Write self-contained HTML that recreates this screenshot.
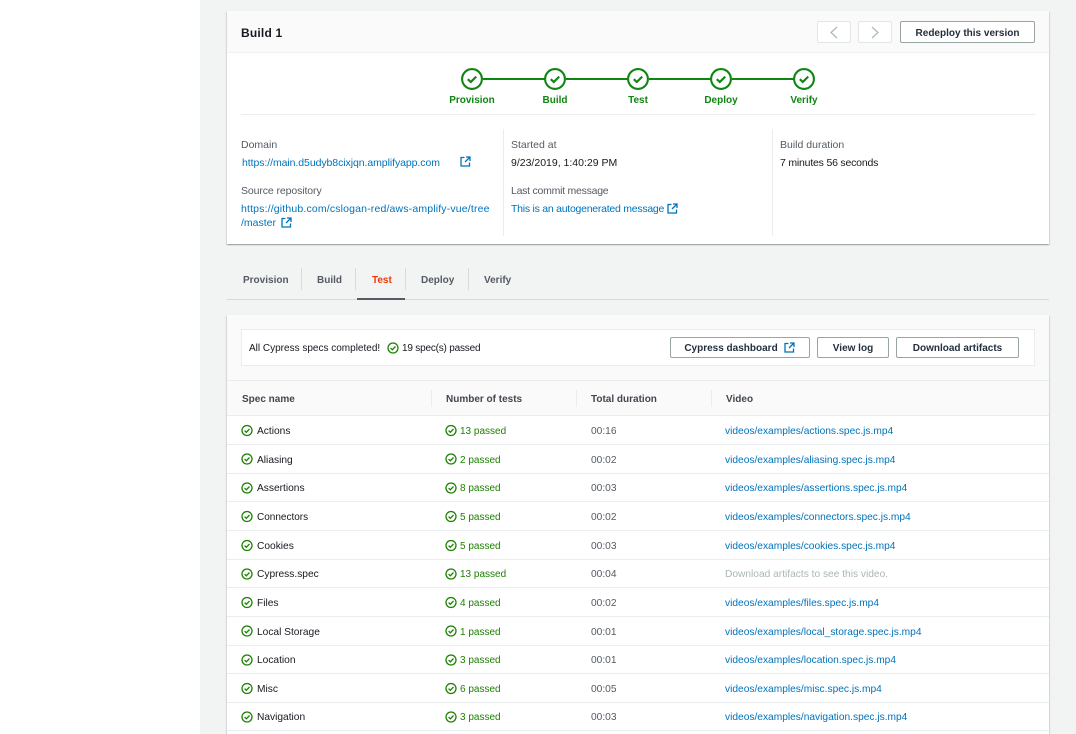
<!DOCTYPE html>
<html><head><meta charset="utf-8"><style>
html,body{margin:0;padding:0;width:1076px;height:734px;overflow:hidden;background:#fff}
body{position:relative;font-family:"Liberation Sans",sans-serif;font-size:10.5px;color:#16191f;filter:blur(.25px)}
div,a{position:absolute;white-space:nowrap}
a{color:#0073bb;text-decoration:none}
.bg{left:200px;top:0;width:876px;height:734px;background:#f2f3f3}
.card{left:227px;width:822px;background:#fff;box-shadow:0 1px 1px 0 rgba(0,28,36,.3),1px 1px 1px 0 rgba(0,28,36,.08),-1px 1px 1px 0 rgba(0,28,36,.08)}
.lbl{color:#545b64}
.step{width:80px;text-align:center;top:95px;color:#0f8512;font-weight:bold;font-size:10px}
.btn{box-sizing:border-box;height:21px;border:1px solid #98a4a5;border-radius:2px;background:#fff;text-align:center;line-height:22px;font-weight:bold;font-size:10px;color:#232f3e}
.tab{top:275px;font-weight:bold;font-size:10px;color:#545b64}
.sep{width:1px;background:#d5dbdb}
.th{top:394px;font-weight:bold;font-size:10px;color:#414750}
.line{left:227px;width:822px;height:1px;background:#eaeded}
.t{line-height:12px;color:#16191f;font-size:10.2px;margin-top:1px}
.g{color:#1d8102;font-size:10px}
.d{color:#545b64}
svg{position:absolute;overflow:visible}
</style></head><body>
<svg width="0" height="0" style="position:absolute"><defs>
<g id="c"><circle cx="6" cy="6" r="5" fill="none" stroke="#1d8102" stroke-width="1.3"/><path d="M3.6 6.1 5.3 7.8 8.5 4.5" fill="none" stroke="#1d8102" stroke-width="1.3"/></g>
<g id="s"><circle cx="11" cy="11" r="9.9" fill="#fff" stroke="#0f8512" stroke-width="2.1"/><path d="M6.8 11.2 9.8 14 15.2 8.6" fill="none" stroke="#0f8512" stroke-width="2.1"/></g>
<g id="e"><path d="M4.5 1.5H1V10H9.5V6.5M6 1H10V5M10 1 5 6" fill="none" stroke="#0073bb" stroke-width="1.3"/></g>
</defs></svg>
<div class="bg"></div>

<div class="card" style="top:11px;height:233px"></div>
<div style="left:227px;top:11px;width:822px;height:42px;background:#fafafa;border-bottom:1px solid #f0f1f1;box-sizing:border-box"></div>
<div style="left:241px;top:26px;font-size:12px;font-weight:bold;letter-spacing:.2px;color:#16191f">Build 1</div>
<div style="box-sizing:border-box;left:817px;top:21px;width:34px;height:22px;border:1px solid #e3e6e6;border-radius:2px;background:#fff"></div>
<div style="box-sizing:border-box;left:858px;top:21px;width:34px;height:22px;border:1px solid #e3e6e6;border-radius:2px;background:#fff"></div>
<svg style="left:817px;top:21px" width="75" height="22"><path d="M20 6 14 11.5 20 17M55 6 61 11.5 55 17" fill="none" stroke="#aab7b8" stroke-width="1.2"/></svg>
<div class="btn" style="left:900px;top:21px;width:135px;height:22px;line-height:23px">Redeploy this version</div>

<svg style="left:461px;top:67.5px" width="354" height="22">
<path d="M22 11H84M105 11H167M188 11H250M271 11H333" stroke="#0f8512" stroke-width="2"/>
<use href="#s" x="0"/><use href="#s" x="83"/><use href="#s" x="166"/><use href="#s" x="249"/><use href="#s" x="332"/>
</svg>
<div class="step" style="left:432px">Provision</div>
<div class="step" style="left:515px">Build</div>
<div class="step" style="left:598px">Test</div>
<div class="step" style="left:681px">Deploy</div>
<div class="step" style="left:764px">Verify</div>
<div style="left:241px;top:114px;width:794px;height:1px;background:#eaeded"></div>
<div class="sep" style="left:503px;top:129px;height:107px;background:#eaeded"></div>
<div class="sep" style="left:772px;top:129px;height:107px;background:#eaeded"></div>

<div class="lbl" style="left:241px;top:139px">Domain</div>
<a style="left:242px;top:157px;letter-spacing:-.07px">https://main.d5udyb8cixjqn.amplifyapp.com</a>
<svg style="left:460px;top:156px" width="11" height="11"><use href="#e"/></svg>
<div class="lbl" style="left:241px;top:185px;letter-spacing:-.1px">Source repository</div>
<a style="left:241px;top:203px;letter-spacing:.16px">https://github.com/cslogan-red/aws-amplify-vue/tree</a>
<a style="left:241px;top:217px">/master</a>
<svg style="left:281px;top:217px" width="11" height="11"><use href="#e"/></svg>

<div class="lbl" style="left:511px;top:139px">Started at</div>
<div style="left:511px;top:157px">9/23/2019, 1:40:29 PM</div>
<div class="lbl" style="left:511px;top:185px;letter-spacing:-.25px">Last commit message</div>
<a style="left:511px;top:203px;letter-spacing:-.25px">This is an autogenerated message</a>
<svg style="left:667px;top:203px" width="11" height="11"><use href="#e"/></svg>

<div class="lbl" style="left:780px;top:139px">Build duration</div>
<div style="left:780px;top:157px;letter-spacing:-.2px">7 minutes 56 seconds</div>

<div class="tab" style="left:243px">Provision</div>
<div class="tab" style="left:317px">Build</div>
<div class="tab" style="left:372px;color:#ec3b0b">Test</div>
<div class="tab" style="left:421px">Deploy</div>
<div class="tab" style="left:484px">Verify</div>
<div class="sep" style="left:301px;top:268px;height:22px"></div>
<div class="sep" style="left:355px;top:268px;height:22px"></div>
<div class="sep" style="left:405px;top:268px;height:22px"></div>
<div class="sep" style="left:468px;top:268px;height:22px"></div>
<div style="left:227px;top:299px;width:822px;height:1px;background:#d5dbdb"></div>
<div style="left:357px;top:298px;width:48px;height:2px;background:#545b64"></div>

<div class="card" style="top:315px;height:430px;background:#fff"></div>
<div style="left:227px;top:315px;width:822px;height:65px;background:#fafafa"></div>
<div style="box-sizing:border-box;left:241px;top:329px;width:794px;height:37px;background:#fff;border:1px solid #eaeded"></div>
<div style="left:249px;top:343px;font-size:10px">All Cypress specs completed!</div>
<svg style="left:387px;top:342px" width="12" height="12"><use href="#c"/></svg>
<div style="left:402px;top:343px;font-size:10px;letter-spacing:-.2px">19 spec(s) passed</div>
<div class="btn" style="left:670px;top:337px;width:140px;padding-right:18px">Cypress dashboard</div>
<svg style="left:784px;top:342px" width="11" height="11"><use href="#e"/></svg>
<div class="btn" style="left:817px;top:337px;width:72px">View log</div>
<div class="btn" style="left:896px;top:337px;width:123px">Download artifacts</div>

<div style="left:227px;top:380px;width:822px;height:36px;box-sizing:border-box;border-top:1px solid #eaeded;border-bottom:1px solid #eaeded;background:#fafafa"></div>
<div class="th" style="left:242px">Spec name</div>
<div class="th" style="left:446px">Number of tests</div>
<div class="th" style="left:591px">Total duration</div>
<div class="th" style="left:726px">Video</div>
<div class="sep" style="left:431px;top:390px;height:17px;background:#eaeded"></div>
<div class="sep" style="left:576px;top:390px;height:17px;background:#eaeded"></div>
<div class="sep" style="left:711px;top:390px;height:17px;background:#eaeded"></div>

<div class="line" style="top:444px"></div>
<div class="line" style="top:473px"></div>
<div class="line" style="top:501px"></div>
<div class="line" style="top:530px"></div>
<div class="line" style="top:559px"></div>
<div class="line" style="top:587px"></div>
<div class="line" style="top:616px"></div>
<div class="line" style="top:645px"></div>
<div class="line" style="top:673px"></div>
<div class="line" style="top:702px"></div>
<div class="line" style="top:730px"></div>

<svg style="left:241px;top:416px" width="215" height="318">
<use href="#c" x="0" y="8.5"/><use href="#c" x="204" y="8.5"/>
<use href="#c" x="0" y="37"/><use href="#c" x="204" y="37"/>
<use href="#c" x="0" y="66"/><use href="#c" x="204" y="66"/>
<use href="#c" x="0" y="94.5"/><use href="#c" x="204" y="94.5"/>
<use href="#c" x="0" y="123.5"/><use href="#c" x="204" y="123.5"/>
<use href="#c" x="0" y="152"/><use href="#c" x="204" y="152"/>
<use href="#c" x="0" y="180.5"/><use href="#c" x="204" y="180.5"/>
<use href="#c" x="0" y="209"/><use href="#c" x="204" y="209"/>
<use href="#c" x="0" y="238"/><use href="#c" x="204" y="238"/>
<use href="#c" x="0" y="266.5"/><use href="#c" x="204" y="266.5"/>
<use href="#c" x="0" y="295"/><use href="#c" x="204" y="295"/>
</svg>

<div class="t" style="left:257px;top:425px">Actions</div><div class="t g" style="left:460px;top:425px">13 passed</div><div class="t d" style="left:591px;top:425px">00:16</div><a class="t" style="left:725px;top:425px;color:#0073bb">videos/examples/actions.spec.js.mp4</a>
<div class="t" style="left:257px;top:454px">Aliasing</div><div class="t g" style="left:460px;top:454px">2 passed</div><div class="t d" style="left:591px;top:454px">00:02</div><a class="t" style="left:725px;top:454px;color:#0073bb">videos/examples/aliasing.spec.js.mp4</a>
<div class="t" style="left:257px;top:482px">Assertions</div><div class="t g" style="left:460px;top:482px">8 passed</div><div class="t d" style="left:591px;top:482px">00:03</div><a class="t" style="left:725px;top:482px;color:#0073bb">videos/examples/assertions.spec.js.mp4</a>
<div class="t" style="left:257px;top:511px;font-size:10px">Connectors</div><div class="t g" style="left:460px;top:511px">5 passed</div><div class="t d" style="left:591px;top:511px">00:02</div><a class="t" style="left:725px;top:511px;color:#0073bb">videos/examples/connectors.spec.js.mp4</a>
<div class="t" style="left:257px;top:540px">Cookies</div><div class="t g" style="left:460px;top:540px">5 passed</div><div class="t d" style="left:591px;top:540px">00:03</div><a class="t" style="left:725px;top:540px;color:#0073bb">videos/examples/cookies.spec.js.mp4</a>
<div class="t" style="left:257px;top:568px">Cypress.spec</div><div class="t g" style="left:460px;top:568px">13 passed</div><div class="t d" style="left:591px;top:568px">00:04</div><div class="t" style="left:725px;top:568px;color:#aab7b8">Download artifacts to see this video.</div>
<div class="t" style="left:257px;top:597px">Files</div><div class="t g" style="left:460px;top:597px">4 passed</div><div class="t d" style="left:591px;top:597px">00:02</div><a class="t" style="left:725px;top:597px;color:#0073bb">videos/examples/files.spec.js.mp4</a>
<div class="t" style="left:257px;top:626px">Local Storage</div><div class="t g" style="left:460px;top:626px">1 passed</div><div class="t d" style="left:591px;top:626px">00:01</div><a class="t" style="left:725px;top:626px;color:#0073bb">videos/examples/local_storage.spec.js.mp4</a>
<div class="t" style="left:257px;top:654px">Location</div><div class="t g" style="left:460px;top:654px">3 passed</div><div class="t d" style="left:591px;top:654px">00:01</div><a class="t" style="left:725px;top:654px;color:#0073bb">videos/examples/location.spec.js.mp4</a>
<div class="t" style="left:257px;top:683px">Misc</div><div class="t g" style="left:460px;top:683px">6 passed</div><div class="t d" style="left:591px;top:683px">00:05</div><a class="t" style="left:725px;top:683px;color:#0073bb">videos/examples/misc.spec.js.mp4</a>
<div class="t" style="left:257px;top:711px">Navigation</div><div class="t g" style="left:460px;top:711px">3 passed</div><div class="t d" style="left:591px;top:711px">00:03</div><a class="t" style="left:725px;top:711px;color:#0073bb">videos/examples/navigation.spec.js.mp4</a>
</body></html>
